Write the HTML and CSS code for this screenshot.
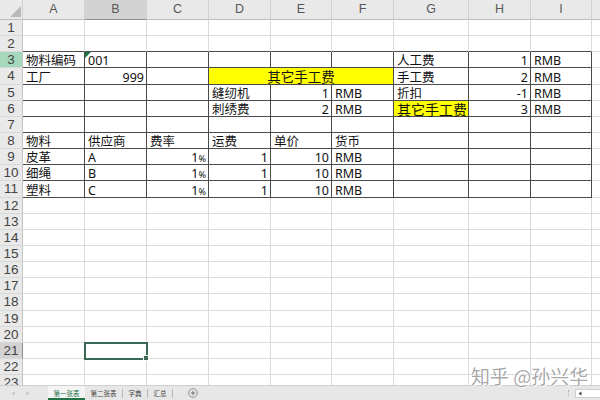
FILE: index.html
```html
<!DOCTYPE html>
<html lang="zh-CN">
<head>
<meta charset="utf-8">
<title>Sheet</title>
<link rel="stylesheet" href="styles.css">
</head>
<body>
<div class="app">
  <div class="sheet">
    <table class="grid">
      <colgroup>
        <col class="rh"><col class="w62"><col class="w62"><col class="w62"><col class="w62"><col class="w61"><col class="w62"><col class="w75"><col class="w62"><col class="w61"><col class="w62">
      </colgroup>
      <thead>
        <tr><th class="corner"><span class="tri"></span></th><th>A</th><th class="hsel">B</th><th>C</th><th>D</th><th>E</th><th>F</th><th>G</th><th>H</th><th>I</th><th></th></tr>
      </thead>
      <tbody>
        <tr><th>1</th><td></td><td></td><td></td><td></td><td></td><td></td><td></td><td></td><td></td><td></td></tr>
        <tr class="top"><th>2</th><td></td><td></td><td></td><td></td><td></td><td></td><td></td><td></td><td></td><td class="j"></td></tr>
        <tr class="bd"><th class="rsel-g">3</th><td>物料编码</td><td class="err">001</td><td></td><td></td><td></td><td></td><td>人工费</td><td class="r">1</td><td>RMB</td><td class="j"></td></tr>
        <tr class="bd"><th>4</th><td>工厂</td><td class="r">999</td><td></td><td colspan="3" class="yel c big1">其它手工费</td><td>手工费</td><td class="r">2</td><td>RMB</td><td class="j"></td></tr>
        <tr class="bd"><th>5</th><td></td><td></td><td></td><td>缝纫机</td><td class="r">1</td><td>RMB</td><td>折扣</td><td class="r">-1</td><td>RMB</td><td class="j"></td></tr>
        <tr class="bd"><th>6</th><td></td><td></td><td></td><td>刺绣费</td><td class="r">2</td><td>RMB</td><td class="yel big2">其它手工费</td><td class="r">3</td><td>RMB</td><td class="j"></td></tr>
        <tr class="bd"><th>7</th><td></td><td></td><td></td><td></td><td></td><td></td><td></td><td></td><td></td><td class="j"></td></tr>
        <tr class="bd"><th>8</th><td>物料</td><td>供应商</td><td>费率</td><td>运费</td><td>单价</td><td>货币</td><td></td><td></td><td></td><td class="j"></td></tr>
        <tr class="bd"><th>9</th><td>皮革</td><td>A</td><td class="r">1<span class="pct">%</span></td><td class="r">1</td><td class="r">10</td><td>RMB</td><td></td><td></td><td></td><td class="j"></td></tr>
        <tr class="bd"><th>10</th><td>细绳</td><td>B</td><td class="r">1<span class="pct">%</span></td><td class="r">1</td><td class="r">10</td><td>RMB</td><td></td><td></td><td></td><td class="j"></td></tr>
        <tr class="bd"><th>11</th><td>塑料</td><td>C</td><td class="r">1<span class="pct">%</span></td><td class="r">1</td><td class="r">10</td><td>RMB</td><td></td><td></td><td></td><td class="j"></td></tr>
        <tr><th>12</th><td></td><td></td><td></td><td></td><td></td><td></td><td></td><td></td><td></td><td></td></tr>
        <tr><th>13</th><td></td><td></td><td></td><td></td><td></td><td></td><td></td><td></td><td></td><td></td></tr>
        <tr><th>14</th><td></td><td></td><td></td><td></td><td></td><td></td><td></td><td></td><td></td><td></td></tr>
        <tr><th>15</th><td></td><td></td><td></td><td></td><td></td><td></td><td></td><td></td><td></td><td></td></tr>
        <tr><th>16</th><td></td><td></td><td></td><td></td><td></td><td></td><td></td><td></td><td></td><td></td></tr>
        <tr><th>17</th><td></td><td></td><td></td><td></td><td></td><td></td><td></td><td></td><td></td><td></td></tr>
        <tr><th>18</th><td></td><td></td><td></td><td></td><td></td><td></td><td></td><td></td><td></td><td></td></tr>
        <tr><th>19</th><td></td><td></td><td></td><td></td><td></td><td></td><td></td><td></td><td></td><td></td></tr>
        <tr><th>20</th><td></td><td></td><td></td><td></td><td></td><td></td><td></td><td></td><td></td><td></td></tr>
        <tr><th class="rsel">21</th><td></td><td class="sel"></td><td></td><td></td><td></td><td></td><td></td><td></td><td></td><td></td></tr>
        <tr><th>22</th><td></td><td></td><td></td><td></td><td></td><td></td><td></td><td></td><td></td><td></td></tr>
        <tr><th>23</th><td></td><td></td><td></td><td></td><td></td><td></td><td></td><td></td><td></td><td></td></tr>
      </tbody>
    </table>
  </div>
  <div class="tabbar">
    <div class="nav">
      <svg width="4" height="5" viewBox="0 0 4 5"><path d="M3.5 0.5 0.5 2.5 3.5 4.5z" fill="#c4c4c4"/></svg>
      <svg width="4" height="5" viewBox="0 0 4 5"><path d="M0.5 0.5 3.5 2.5 0.5 4.5z" fill="#c4c4c4"/></svg>
    </div>
    <div class="tab active">第一张表</div>
    <div class="tab">第二张表</div>
    <span class="sep"></span>
    <div class="tab">字典</div>
    <span class="sep"></span>
    <div class="tab">汇总</div>
    <span class="sep"></span>
    <div class="add">
      <svg width="10" height="10" viewBox="0 0 10 10"><circle cx="5" cy="5" r="4.3" fill="none" stroke="#8a8a8a" stroke-width="0.9"/><path d="M5 2.8v4.4M2.8 5h4.4" stroke="#6a6a6a" stroke-width="0.9"/></svg>
    </div>
    <div class="spacer"></div>
    <div class="split"></div>
    <div class="hscroll">
      <svg width="4" height="5" viewBox="0 0 4 5"><path d="M3.5 0.5 0.5 2.5 3.5 4.5z" fill="#444"/></svg>
    </div>
  </div>
  <div class="watermark">知乎 @孙兴华</div>
</div>
</body>
</html>
```

FILE: styles.css
```css
* { box-sizing: border-box; }
html, body { margin: 0; padding: 0; }
body {
  width: 600px;
  height: 400px;
  overflow: hidden;
  background: #ffffff;
  font-family: "Noto Sans", "Noto Sans CJK SC", sans-serif;
  color: #111;
}
.app {
  position: relative;
  display: flex;
  flex-direction: column;
  width: 600px;
  height: 400px;
}
.sheet {
  flex: none;
  height: 385px;
  overflow: hidden;
}
.grid {
  border-collapse: separate;
  border-spacing: 0;
  table-layout: fixed;
  width: 654px;
}
col.rh { width: 23px; }
col.w62 { width: 62px; }
col.w61 { width: 61px; }
col.w75 { width: 75px; }

thead th {
  height: 20px;
  padding: 0;
  background: #e9e9e9;
  color: #585858;
  font-family: "Liberation Sans", sans-serif;
  font-weight: normal;
  font-size: 12.5px;
  line-height: 19px;
  text-align: center;
  vertical-align: middle;
  border-right: 1px solid #d2d2d2;
  border-bottom: 1px solid #bdbdbd;
}
thead th.hsel {
  background: #d3d3d3;
  border-bottom-color: #8e8e8e;
}
.corner {
  text-align: right;
  vertical-align: bottom;
}
.tri {
  display: inline-block;
  width: 0;
  height: 0;
  border-left: 11px solid transparent;
  border-bottom: 11px solid #b8b8b8;
  margin: 0 1px 2px 0;
  vertical-align: bottom;
}

tbody tr { height: 16.15px; }
tbody th {
  padding: 1px 0 0;
  background: #e9e9e9;
  color: #444;
  font-family: "Liberation Sans", sans-serif;
  font-weight: normal;
  font-size: 13.5px;
  line-height: 14px;
  text-align: center;
  vertical-align: middle;
  border-right: 1px solid #c4c4c4;
  border-bottom: 1px solid #d8d8d8;
}
tbody th.rsel-g { background: #a6d9bc; }
tbody th.rsel { background: #d3d3d3; border-right-color: #8e8e8e; }

td {
  padding: 0 2px 0 3px;
  font-size: 12.5px;
  line-height: 13px;
  vertical-align: bottom;
  white-space: nowrap;
  border-right: 1px solid #dadada;
  border-bottom: 1px solid #dadada;
}
td.r { text-align: right; }
td.c { text-align: center; padding: 0; }
td.yel { background: #ffff00; }
td.big1 { font-size: 13.5px; }
td.big2 { font-size: 14px; }
.pct { font-size: 9px; line-height: 9px; }

tr.top td { border-bottom-color: #4a4a4a; }
tr.bd td { border-right-color: #4a4a4a; border-bottom-color: #4a4a4a; }
tr.top td.j, tr.bd td.j { border-right-color: #dadada; border-bottom-color: #dadada; }

td.err { position: relative; }
td.err::before {
  content: "";
  position: absolute;
  left: 0;
  top: 0;
  border-top: 6px solid #1f7246;
  border-right: 6px solid transparent;
}
td.sel {
  position: relative;
  outline: 2px solid #3a6a54;
  outline-offset: -1px;
}
td.sel::after {
  content: "";
  position: absolute;
  right: -3px;
  bottom: -3px;
  width: 4px;
  height: 4px;
  background: #3a6a54;
  border: 1px solid #fff;
}

.watermark {
  position: absolute;
  left: 471px;
  top: 366px;
  font-family: "Noto Sans CJK SC", sans-serif;
  font-size: 19px;
  line-height: 19px;
  color: rgba(140, 140, 140, 0.75);
  text-shadow: 1px 1px 0 rgba(255, 255, 255, 0.9), -1px -1px 0 rgba(255, 255, 255, 0.6);
  white-space: nowrap;
}

.tabbar {
  flex: none;
  height: 15px;
  display: flex;
  align-items: center;
  background: #e7e7e7;
  border-top: 1px solid #cfcfcf;
  font-family: "Noto Sans CJK SC", sans-serif;
}
.nav {
  width: 48px;
  display: flex;
  align-items: center;
  gap: 11px;
  padding-left: 11px;
}
.tab {
  height: 100%;
  display: flex;
  align-items: center;
  padding: 0 5.5px;
  font-size: 6.5px;
  color: #444;
}
.tab.active {
  width: 37px;
  justify-content: center;
  background: #f4f4f4;
  color: #217346;
  border-bottom: 2px solid #217346;
  padding-top: 2px;
}
.sep {
  width: 1px;
  height: 9px;
  background: #b9b9b9;
}
.add {
  margin-left: 15px;
  display: flex;
  align-items: center;
}
.spacer { flex: 1; }
.split {
  width: 2px;
  height: 6px;
  margin-right: 5px;
  border-left: 1px dotted #b0b0b0;
}
.hscroll {
  width: 25px;
  height: 9px;
  background: #ffffff;
  border: 1px solid #cfcfcf;
  border-right: none;
  display: flex;
  align-items: center;
  padding-left: 2px;
}
```
